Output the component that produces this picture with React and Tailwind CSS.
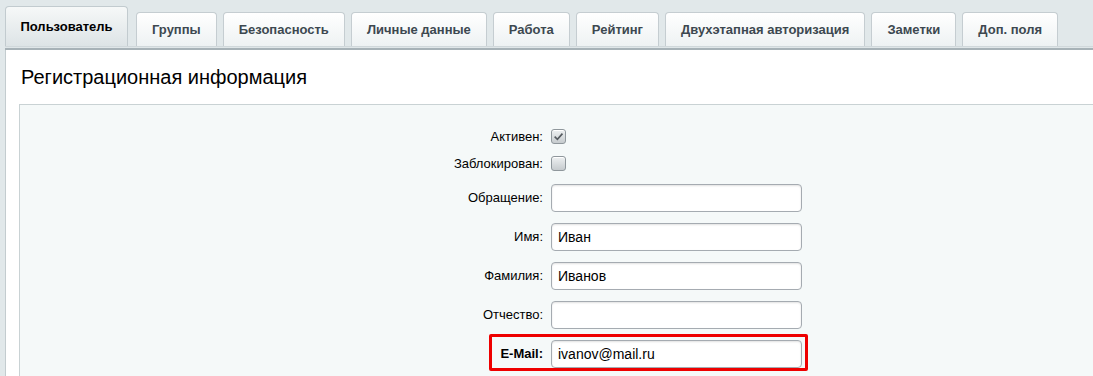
import React from "react";

const tabs = [
  "Группы",
  "Безопасность",
  "Личные данные",
  "Работа",
  "Рейтинг",
  "Двухэтапная авторизация",
  "Заметки",
  "Доп. поля",
];

function Checkbox({ checked }) {
  return (
    <span className="w-[15px] h-[15px] rounded-[3px] border border-[#8f979c] bg-gradient-to-b from-[#eef1f2] to-[#c6cbce] flex items-center justify-center shadow-[inset_0_1px_0_#fff]">
      {checked && (
        <svg width="11" height="11" viewBox="0 0 10 10">
          <path d="M1.5 5.2 L4 7.6 L8.6 2.4" fill="none" stroke="#555b60" strokeWidth="1.5" />
        </svg>
      )}
    </span>
  );
}

function Field({ label, value, bold, first }) {
  return (
    <div className={"flex items-center h-[28px] " + (first ? "mt-[7px]" : "mt-[11px]")}>
      <div className={"w-[531px] pr-[8px] text-right text-[13px] text-black " + (bold ? "font-bold" : "")}>{label}</div>
      <div className="w-[251px] h-[28px] rounded-[4px] border border-[#a5abb1] bg-white shadow-[inset_0_1px_2px_rgba(0,0,0,0.12)] px-[6px] flex items-center text-[14px] text-black">
        {value}
      </div>
    </div>
  );
}

export default function App() {
  return (
    <div className="w-full h-[376px] overflow-hidden bg-[#e1e8ea]" style={{ fontFamily: '"Liberation Sans", Arial, sans-serif' }}>
      <div className="w-[1120px] pl-[5px] pt-[7px]">
        {/* tab strip */}
        <div className="flex items-end gap-[6px] h-[40px] border-b border-[#d0d8db]">
          <div className="w-[123px] mr-[2px] h-[40px] rounded-t-[4px] border border-b-0 border-[#c2cbcf] bg-gradient-to-b from-[#f6f8f8] to-[#dde4e6] flex items-center justify-center text-[13px] font-bold text-black">
            Пользователь
          </div>
          {tabs.map((t) => (
            <div
              key={t}
              className="h-[34px] px-[15px] rounded-t-[4px] border border-b-0 border-[#c5cdd1] bg-gradient-to-b from-[#ffffff] to-[#eef2f3] flex items-center text-[13px] font-bold text-[#3d4850]"
            >
              {t}
            </div>
          ))}
        </div>
        <div className="h-[3px] bg-[#dfe6e8] border-b-2 border-[#a7b2b7]"></div>
        {/* content panel */}
        <div className="bg-white border-l border-[#c3cccf] pl-[13px] h-[330px]">
          <div className="h-[54px] flex items-center pl-[2px] text-[20px] text-black">Регистрационная информация</div>
          <div className="bg-[#f5f9f9] border border-[#c9d2d4] h-[300px] pt-[18px]">
            <div className="flex items-center h-[27px]">
              <div className="w-[531px] pr-[8px] text-right text-[13px] text-black">Активен:</div>
              <Checkbox checked />
            </div>
            <div className="flex items-center h-[27px]">
              <div className="w-[531px] pr-[8px] text-right text-[13px] text-black">Заблокирован:</div>
              <Checkbox />
            </div>
            <Field label="Обращение:" value="" first />
            <Field label="Имя:" value="Иван" />
            <Field label="Фамилия:" value="Иванов" />
            <Field label="Отчество:" value="" />
            <div className="relative">
              <Field label="E-Mail:" value="ivanov@mail.ru" bold />
              <div className="absolute left-[469px] top-[-6px] w-[319px] h-[37px] border-[3px] border-[#ee0000] rounded-[2px]"></div>
            </div>
          </div>
        </div>
      </div>
    </div>
  );
}
